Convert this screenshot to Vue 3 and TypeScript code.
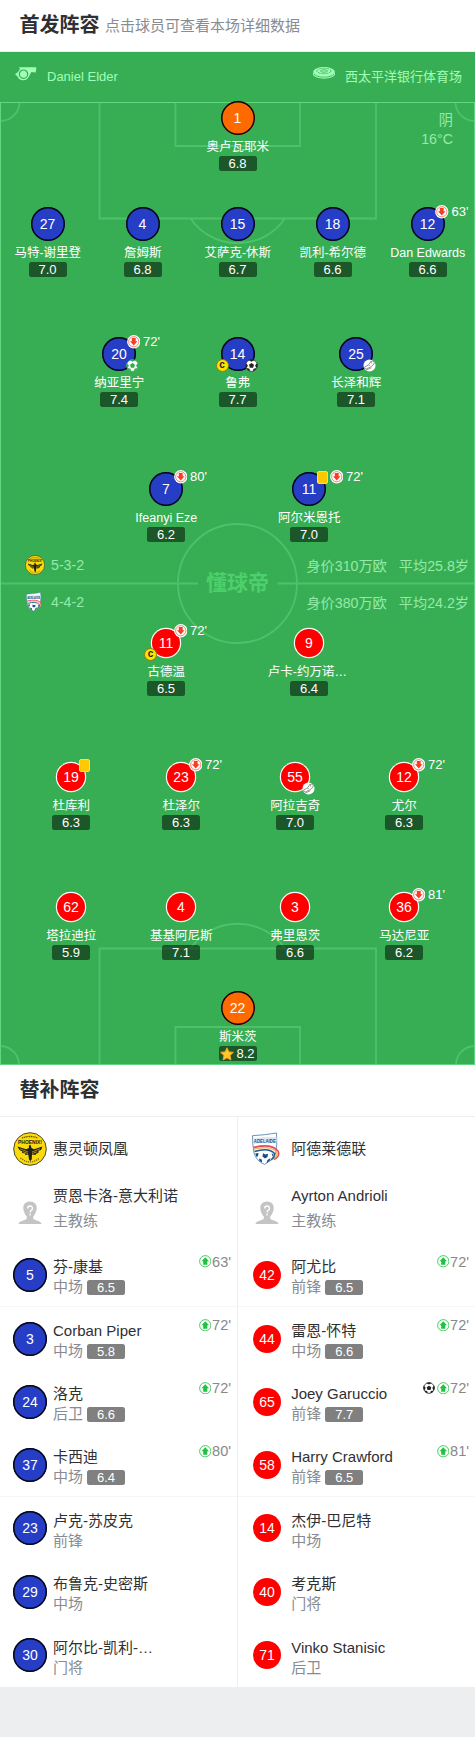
<template>
  <div class="lineup">
    <header class="section-head">
      <h2>首发阵容</h2>
      <span class="hint">点击球员可查看本场详细数据</span>
    </header>

    <section class="field">
      <div class="match-info">
        <div class="info-item">
          <svg class="whistle" viewBox="0 0 22 14">
            <path d="M0 7.2 3 5 5 2 4 .3 8 .2 20.8.3 21.4 1.2 20.6 5.4 16.4 5 15.3 7 14 9.5A6.3 6.3 0 0 1 2.4 9.2Z" fill="#a0ffb6" />
            <circle cx="8.5" cy="7.2" r="4.2" fill="#a0ffb6" stroke="#38ae54" stroke-width="1.2" />
          </svg>
          <span>Daniel Elder</span>
        </div>
        <div class="info-item">
          <svg class="stadium" viewBox="0 0 22 13">
            <path d="M0 5v2.6c2 5.5 20 5.5 22 0V5c-2 5-20 5-22 0z" fill="#a0ffb6" />
            <ellipse cx="11" cy="4.7" rx="10.8" ry="4.6" fill="#a0ffb6" />
            <path d="M1 7.2c3 4 17 4 20 0" fill="none" stroke="#38ae54" stroke-width=".8" />
            <ellipse cx="11" cy="4" rx="7.2" ry="2.7" fill="none" stroke="#38ae54" stroke-width=".7" stroke-dasharray="3 .8" />
            <ellipse cx="11" cy="4" rx="3.5" ry="1.2" fill="none" stroke="#38ae54" stroke-width=".8" />
          </svg>
          <span>西太平洋银行体育场</span>
        </div>
      </div>

      <div class="pitch">
        <svg class="markings" viewBox="0 0 475 964" fill="none" stroke="#4dc26b" stroke-width="1.8">
          <path d="M99.5 1v116.5h276.5V1M175.5 1v44h124.5V1M190.5 117.5a57.5 57.5 0 0 0 94.5 0" />
          <path d="M19.5 1A19 19 0 0 1 .5 20M455.5 1A19 19 0 0 0 474.5 20" />
          <path d="M.5 482.5H198M277.5 482.5H474" />
          <circle cx="237.5" cy="482.5" r="59.5" />
          <path d="M99.5 964V847.5h276.5v116.5M175.5 964v-38h124.5v38M190.5 847.5a57.5 57.5 0 0 1 94.5 0" />
          <path d="M.5 945A19 19 0 0 1 19 964M474.5 945A19 19 0 0 0 456 964" />
          <rect x=".5" y="1.5" width="474" height="962" stroke="#60d880" stroke-width="1" />
        </svg>
        <div class="watermark">懂球帝</div>
        <div class="weather">阴<br />16°C</div>

        <template v-for="(row, i) in rows" :key="i">
          <div v-if="row.length" class="row" :class="'row-' + row.length">
            <div v-for="p in row" :key="p.name" class="player">
              <div class="avatar">
                <div class="shirt" :class="p.kit">{{ p.num }}</div>
                <div class="top-events">
                  <i v-if="p.card" class="card"></i>
                  <template v-if="p.off">
                    <svg class="badge" viewBox="0 0 14 14">
                      <circle cx="7" cy="7" r="6.9" fill="#fff" />
                      <circle cx="7" cy="7" r="5.3" fill="none" stroke="#f9604e" stroke-width=".8" />
                      <path d="M5 3.2h4V6.6h1.900L7 10.800 3.100 6.600H5z" fill="#fb3c24" />
                    </svg>
                    <span>{{ p.off }}'</span>
                  </template>
                </div>
                <div v-if="p.captain" class="captain">c</div>
                <svg v-if="p.mark === 'boot'" class="corner" viewBox="0 0 14 14">
                  <circle cx="7" cy="7" r="6.5" fill="#fff" />
                  <path d="M2 8.5 6 6.3 8.3 2.8 11.8 2 12 5.3 8.5 8.5 3.5 10.7 1.6 10zM8.3 2.8 9.5 5M6 6.3l1.5 1.5M3 12l6-2.5" fill="none" stroke="#777" stroke-width=".8" />
                </svg>
                <svg v-else-if="p.mark" class="corner" viewBox="0 0 14 14">
                  <circle cx="7" cy="7" r="6.3" fill="#fff" :stroke="ballColor(p.mark)" stroke-width=".7" />
                  <path :d="ballPath" :fill="ballColor(p.mark)" />
                </svg>
              </div>
              <div class="name" :class="{ cut: p.name.endsWith('…') }">{{ p.name }}</div>
              <div class="score">
                <svg v-if="p.best" class="star" viewBox="0 0 14 14">
                  <path d="M7 .8 8.9 4.9 13.4 5.3 10 8.5 11 13 7 10.8 3 13 4 8.5.6 5.3 5.1 4.9z" fill="#ffc928" stroke="#f9a01b" stroke-linejoin="round" />
                </svg>
                {{ p.score }}
              </div>
            </div>
          </div>
          <div v-else class="formations">
            <div v-for="(team, t) in teams" :key="team.name" class="formation">
              <TeamLogo :index="t" :size="20" />
              <span class="shape">{{ team.shape }}</span>
              <span>身价{{ team.value }}万欧</span>
              <span class="age">平均{{ team.age }}岁</span>
            </div>
          </div>
        </template>
      </div>
    </section>

    <header class="section-head">
      <h2>替补阵容</h2>
    </header>
    <section class="bench">
      <div v-for="(team, t) in teams" :key="team.name" class="bench-col">
        <div class="sub">
          <div class="sub-pic"><TeamLogo :index="t" :size="34" /></div>
          <div class="sub-name">{{ team.name }}</div>
        </div>
        <div class="sub coach">
          <div class="sub-pic">
            <svg class="nobody" viewBox="0 0 24 24">
              <path d="M12 .5c4.5 0 7 3 6.7 7-.2 3.5-1.8 6-3.5 8v2c1 2 7.8 2 8.3 5.5H.5c.5-3.5 7.3-3.5 8.3-5.5v-2c-1.7-2-3.3-4.5-3.5-8C5 3.5 7.5.5 12 .5z" fill="#c4c4c4" />
              <path d="M9.7 7.5c0-3.3 4.9-3.3 4.8 0 0 1.8-2.4 1.9-2.4 4M12.1 12.7v1.7" fill="none" stroke="#fff" stroke-width="1.4" />
            </svg>
          </div>
          <div>
            <div class="sub-name">{{ team.coach }}</div>
            <div class="sub-pos">主教练</div>
          </div>
        </div>
        <div v-for="s in team.subs" :key="s.num" class="sub">
          <div class="sub-pic"><div class="shirt" :class="t ? 'red' : 'blue'">{{ s.num }}</div></div>
          <div class="sub-text">
            <div class="sub-name">{{ s.name }}</div>
            <div class="sub-pos">
              {{ s.pos }}
              <span v-if="s.score" class="score gray">{{ s.score }}</span>
            </div>
          </div>
          <div v-if="s.on" class="sub-on">
            <svg v-if="s.goal" class="goal" viewBox="0 0 14 14">
              <circle cx="7" cy="7" r="6.2" fill="#fff" stroke="#333" />
              <path :d="ballPath" fill="#222" />
            </svg>
            <svg class="up" viewBox="0 0 14 14">
              <circle cx="7" cy="7" r="6.3" fill="#fff" stroke="#32c653" stroke-width="1" />
              <path d="M7 2.6 11.2 7H9.3v4H4.7V7H2.8z" fill="#20c144" />
            </svg>
            <span>{{ s.on }}'</span>
          </div>
        </div>
      </div>
    </section>
  </div>
</template>

<script setup lang="ts">
import { h, type FunctionalComponent } from 'vue'

interface Player {
  num: number
  name: string
  score: string
  kit: 'blue' | 'red' | 'keeper'
  off?: number
  card?: boolean
  captain?: boolean
  best?: boolean
  mark?: 'goal' | 'penalty' | 'boot'
}

interface Sub {
  num: number
  name: string
  pos: string
  score?: string
  on?: number
  goal?: boolean
}

interface Team {
  name: string
  shape: string
  value: number
  age: string
  coach: string
  subs: Sub[]
}

// an empty row is the band with the two formations
const rows: Player[][] = [
  [{ num: 1, name: '奥卢瓦耶米', score: '6.8', kit: 'keeper' }],
  [
    { num: 27, name: '马特-谢里登', score: '7.0', kit: 'blue' },
    { num: 4, name: '詹姆斯', score: '6.8', kit: 'blue' },
    { num: 15, name: '艾萨克-休斯', score: '6.7', kit: 'blue' },
    { num: 18, name: '凯利-希尔德', score: '6.6', kit: 'blue' },
    { num: 12, name: 'Dan Edwards', score: '6.6', kit: 'blue', off: 63 },
  ],
  [
    { num: 20, name: '纳亚里宁', score: '7.4', kit: 'blue', off: 72, mark: 'penalty' },
    { num: 14, name: '鲁弗', score: '7.7', kit: 'blue', captain: true, mark: 'goal' },
    { num: 25, name: '长泽和辉', score: '7.1', kit: 'blue', mark: 'boot' },
  ],
  [
    { num: 7, name: 'Ifeanyi Eze', score: '6.2', kit: 'blue', off: 80 },
    { num: 11, name: '阿尔米恩托', score: '7.0', kit: 'blue', card: true, off: 72 },
  ],
  [],
  [
    { num: 11, name: '古德温', score: '6.5', kit: 'red', captain: true, off: 72 },
    { num: 9, name: '卢卡-约万诺…', score: '6.4', kit: 'red' },
  ],
  [
    { num: 19, name: '杜库利', score: '6.3', kit: 'red', card: true },
    { num: 23, name: '杜泽尔', score: '6.3', kit: 'red', off: 72 },
    { num: 55, name: '阿拉吉奇', score: '7.0', kit: 'red', mark: 'boot' },
    { num: 12, name: '尤尔', score: '6.3', kit: 'red', off: 72 },
  ],
  [
    { num: 62, name: '塔拉迪拉', score: '5.9', kit: 'red' },
    { num: 4, name: '基基阿尼斯', score: '7.1', kit: 'red' },
    { num: 3, name: '弗里恩茨', score: '6.6', kit: 'red' },
    { num: 36, name: '马达尼亚', score: '6.2', kit: 'red', off: 81 },
  ],
  [{ num: 22, name: '斯米茨', score: '8.2', kit: 'keeper', best: true }],
]

const teams: Team[] = [
  {
    name: '惠灵顿凤凰',
    shape: '5-3-2',
    value: 310,
    age: '25.8',
    coach: '贾恩卡洛-意大利诺',
    subs: [
      { num: 5, name: '芬-康基', pos: '中场', score: '6.5', on: 63 },
      { num: 3, name: 'Corban Piper', pos: '中场', score: '5.8', on: 72 },
      { num: 24, name: '洛克', pos: '后卫', score: '6.6', on: 72 },
      { num: 37, name: '卡西迪', pos: '中场', score: '6.4', on: 80 },
      { num: 23, name: '卢克-苏皮克', pos: '前锋' },
      { num: 29, name: '布鲁克-史密斯', pos: '中场' },
      { num: 30, name: '阿尔比-凯利-…', pos: '门将' },
    ],
  },
  {
    name: '阿德莱德联',
    shape: '4-4-2',
    value: 380,
    age: '24.2',
    coach: 'Ayrton Andrioli',
    subs: [
      { num: 42, name: '阿尤比', pos: '前锋', score: '6.5', on: 72 },
      { num: 44, name: '雷恩-怀特', pos: '中场', score: '6.6', on: 72 },
      { num: 65, name: 'Joey Garuccio', pos: '前锋', score: '7.7', on: 72, goal: true },
      { num: 58, name: 'Harry Crawford', pos: '前锋', score: '6.5', on: 81 },
      { num: 14, name: '杰伊-巴尼特', pos: '中场' },
      { num: 40, name: '考克斯', pos: '门将' },
      { num: 71, name: 'Vinko Stanisic', pos: '后卫' },
    ],
  },
]

const ballPath =
  'M7 4.3 9.7 6.2 8.700 9.300H5.300L4.300 6.200zM4 1.200 7 3 10 1.200 8.500.5h-3zM13.200 4.200 10.900 6.600 12 9.700 13.400 8.500 13.500 6zM.8 4.200 3.100 6.600 2 9.700.6 8.500.5 6zM8.700 13.300 9.100 10.500 12.200 9.800 11.300 11.900zM5.300 13.300 4.900 10.500 1.800 9.800 2.700 11.900z'

function ballColor(mark: string) {
  return mark === 'penalty' ? '#2fae50' : '#222222'
}

const phoenix = () => [
  h('circle', { cx: 17, cy: 17, r: 16.3, fill: '#fbdb0b', stroke: '#4a4528', 'stroke-width': 1 }),
  h('path', { d: 'M9 6q8-3 16 0', fill: 'none', stroke: '#5c510f', 'stroke-width': 1.3, 'stroke-dasharray': '1.2 .6' }),
  h('text', { x: 17, y: 12.3, 'font-size': 6, 'font-weight': 700, 'text-anchor': 'middle', textLength: 24, lengthAdjust: 'spacingAndGlyphs', 'font-family': 'Liberation Sans, sans-serif', fill: '#171717' }, 'PHOENIX!'),
  h('path', {
    d: 'M4.5 14.5 13 17.2 16 16 15.8 13.5 17.5 12.8 18.5 16 21 17.2 29.5 14.5 28 18 25 19 26 20 24 21.5 22.5 22 23 23 19 22.5 18.7 27.5 17.3 29 16 27.5 15.3 22.5 12 23 12.5 21.5 9 21 9.5 19.5 6.5 18z',
    fill: '#202020',
  }),
  h('path', { d: 'M7 16.8l8 3.2M27 16.8l-8 3.2M10 19.8l5 1.7M24 19.8l-5 1.7', stroke: '#fbdb0b', 'stroke-width': 0.6 }),
  h('path', { d: 'M7.5 26q9.5 8 19 0', fill: 'none', stroke: '#6b5f13', 'stroke-width': 1.2, 'stroke-dasharray': '1.2 .9' }),
]

const adelaide = () => [
  h('path', { d: 'M2.5 3.7Q15 3 26.5 1 27.5 13 25.5 22 22 29 14.5 32.5 6 28.5 4 21 2.5 13 2.5 3.7z', fill: '#fff', stroke: '#477aa2', 'stroke-width': 0.8 }),
  h('path', { d: 'M3 6.5Q14 4.5 26.5 5V10.5Q14 9 3.4 12.5z', fill: '#dce8f1' }),
  h('text', { x: 14.8, y: 11.2, 'font-size': 6, 'font-weight': 700, 'text-anchor': 'middle', textLength: 22, lengthAdjust: 'spacingAndGlyphs', 'font-family': 'Liberation Sans, sans-serif', fill: '#14568c' }, 'ADELAIDE'),
  h('path', { d: 'M3.5 15.5Q21 11 28 19 30.5 24 24 27.5', fill: 'none', stroke: '#ea4a62', 'stroke-width': 1.6 }),
  h('path', { d: 'M4 17.2Q20 13 26.5 20 28.5 24 23 27', fill: 'none', stroke: '#f3b15d', 'stroke-width': 1.3 }),
  h('path', { d: 'M4.5 19.5Q19 15 24.5 21.5 25 25 21 28', fill: 'none', stroke: '#1b5c93', 'stroke-width': 1.5 }),
  h('path', {
    d: 'M13 21.2 15.5 22.5 18 21.8 17.5 25 15 26.5 12.5 24.5zM5.2 21.5 8.5 21 8 24 6.5 25zM9 26.5 11.8 27.5 12 30.5 9.5 29zM17.5 28 20.5 26 19.5 29 16.5 31zM21.5 21.5l2 .8-.8 2.5z',
    fill: '#174d82',
  }),
]

const TeamLogo: FunctionalComponent<{ index: number; size: number }> = (props) =>
  h('svg', { viewBox: '0 0 34 34', width: props.size, height: props.size }, props.index ? adelaide() : phoenix())
TeamLogo.props = ['index', 'size']
</script>

<style>
body {
  background: #edeef0;
}
</style>

<style scoped>
.lineup {
  width: 475px;
  height: 1737px;
  background: #edeef0;
  color: #2f3033;
  font-family: 'Liberation Sans', 'Noto Sans CJK SC', sans-serif;
}

.lineup svg {
  display: block;
  flex-shrink: 0;
}

.section-head {
  display: flex;
  align-items: center;
  box-sizing: border-box;
  height: 52px;
  padding: 0 19.5px 2px;
  background: #fff;
  border-bottom: 1px solid #edeef0;
}

.section-head h2 {
  margin: 0 5.5px 0 0;
  font-size: 20px;
  line-height: 30px;
}

.hint {
  font-size: 15px;
  color: #888c92;
}

.field {
  background: #38ae54;
}

.match-info {
  display: flex;
  justify-content: space-between;
  height: 49px;
  padding: 0 13px 0 15px;
  color: #a0ffb6;
  font-size: 13px;
}

.info-item {
  display: flex;
  align-items: flex-start;
  gap: 10px;
}

.info-item span {
  margin-top: 15px;
  line-height: 20px;
}

.whistle {
  width: 22px;
  height: 14px;
  margin-top: 15px;
}

.stadium {
  width: 22px;
  height: 13px;
  margin-top: 15px;
}

.pitch {
  position: relative;
  display: grid;
  grid-template-rows: 106px 130px 135px 75px 79px 134px 130px 101px 74px;
  grid-template-columns: 475px;
}

.markings {
  position: absolute;
  top: 0;
  left: 0;
  width: 475px;
  height: 964px;
}

.watermark {
  position: absolute;
  top: 467px;
  left: 0;
  width: 475px;
  text-align: center;
  font-size: 21px;
  line-height: 30px;
  font-weight: bold;
  color: #4dcf6c;
}

.weather {
  position: absolute;
  top: 10px;
  right: 22px;
  text-align: right;
  font-size: 14.25px;
  line-height: 19px;
  color: #94eaa8;
}

.row {
  position: relative;
  display: grid;
  grid-auto-flow: column;
  justify-content: center;
  grid-auto-columns: 95px;
}

.row-3 {
  grid-auto-columns: 118.5px;
}

.row-2 {
  grid-auto-columns: 143px;
}

.row-4 {
  grid-template-columns: 106px 114px 114px 104px;
  justify-content: start;
  padding-left: 18px;
}

.player {
  display: flex;
  flex-direction: column;
  align-items: center;
}

.avatar {
  position: relative;
  display: flex;
  align-items: center;
  justify-content: center;
  width: 34px;
  height: 34px;
}

.shirt {
  display: flex;
  align-items: center;
  justify-content: center;
  width: 34px;
  height: 34px;
  border-radius: 50%;
  background: #263dc5;
  box-shadow: inset 0 0 0 1.5px #07070f;
  color: #fff;
  font-size: 14px;
}

.shirt.keeper {
  background: #ff6a00;
}

.shirt.red {
  width: 28px;
  height: 28px;
  background: #fe0000;
  box-shadow: 0 0 0 1.2px #fff;
}

.top-events {
  position: absolute;
  top: -2px;
  left: 24.5px;
  display: flex;
  align-items: center;
  height: 14px;
  color: #fff;
  font-size: 13px;
}

.top-events span {
  margin: -1px 0 0 3px;
}

.badge {
  width: 13.5px;
  height: 13.5px;
}

.card {
  box-sizing: border-box;
  width: 11px;
  height: 13px;
  margin-right: 2px;
  border: 1px solid #ffdc59;
  border-radius: 2px;
  background: #ffc800;
}

.corner {
  position: absolute;
  left: 24px;
  top: 22px;
  width: 13px;
  height: 13px;
}

.captain {
  position: absolute;
  left: -5px;
  top: 22px;
  box-sizing: border-box;
  width: 13px;
  height: 13px;
  border: 1px solid #8a7a10;
  border-radius: 50%;
  background: #ffe000;
  color: #222;
  font-size: 10px;
  line-height: 10px;
  font-weight: bold;
  text-align: center;
}

.name {
  padding: 2px 0 0 0.5px;
  height: 19px;
  line-height: 20px;
  font-size: 12.5px;
  color: #fff;
  white-space: nowrap;
}

/* truncated names fill the whole name box, left-aligned */
.name.cut {
  width: 83px;
}

.score {
  display: flex;
  align-items: center;
  justify-content: center;
  width: 38px;
  height: 15px;
  border-radius: 2.5px;
  background: rgba(0, 0, 0, 0.5);
  color: #fff;
  font-size: 13px;
  line-height: 15px;
}

.star {
  width: 14px;
  height: 14px;
  margin-right: 2px;
}

.formations {
  position: relative;
  margin-top: -1px;
}

.formation {
  display: flex;
  align-items: center;
  height: 37px;
  padding: 0 6px 0 25px;
  color: #94eaa8;
  font-size: 14.2px;
}

.shape {
  flex: 1;
  margin-left: 6px;
}

.age {
  margin-left: 12px;
}

.bench {
  display: grid;
  grid-template-columns: 237px 238px;
  background: #fff;
}

.bench-col + .bench-col {
  border-left: 1px solid #edeef0;
}

.sub {
  position: relative;
  display: flex;
  align-items: center;
  box-sizing: border-box;
  height: 63.3px;
  padding-left: 13px;
}

.bench-col + .bench-col .sub {
  padding-left: 12px;
}

.sub:nth-child(3n) {
  border-bottom: 1px solid #f6f6f7;
}

.sub:last-child {
  border-bottom: 0;
}

.sub-pic {
  display: flex;
  align-items: center;
  justify-content: center;
  width: 34px;
  margin-right: 6px;
}

.bench-col + .bench-col .sub-pic {
  margin-right: 7.2px;
}

.sub-name {
  font-size: 15px;
  line-height: 20px;
  white-space: nowrap;
}

.sub-pos {
  display: flex;
  align-items: center;
  gap: 4px;
  color: #888c92;
  font-size: 15px;
  line-height: 20px;
}

.sub-text {
  margin-top: 5px;
}

.coach .sub-name {
  margin-bottom: 5px;
}

.coach {
  padding-bottom: 6px;
}

.nobody {
  width: 24px;
  height: 24px;
  margin-top: 8px;
}

.score.gray {
  background: #808080;
}

.sub-on {
  position: absolute;
  top: 9px;
  right: 6px;
  display: flex;
  align-items: center;
  height: 18px;
  color: #888;
  font-size: 14.5px;
}

.up {
  width: 12.5px;
  height: 12.5px;
  margin-right: 1px;
}

.goal {
  width: 12px;
  height: 12px;
  margin-right: 1.5px;
}
</style>
